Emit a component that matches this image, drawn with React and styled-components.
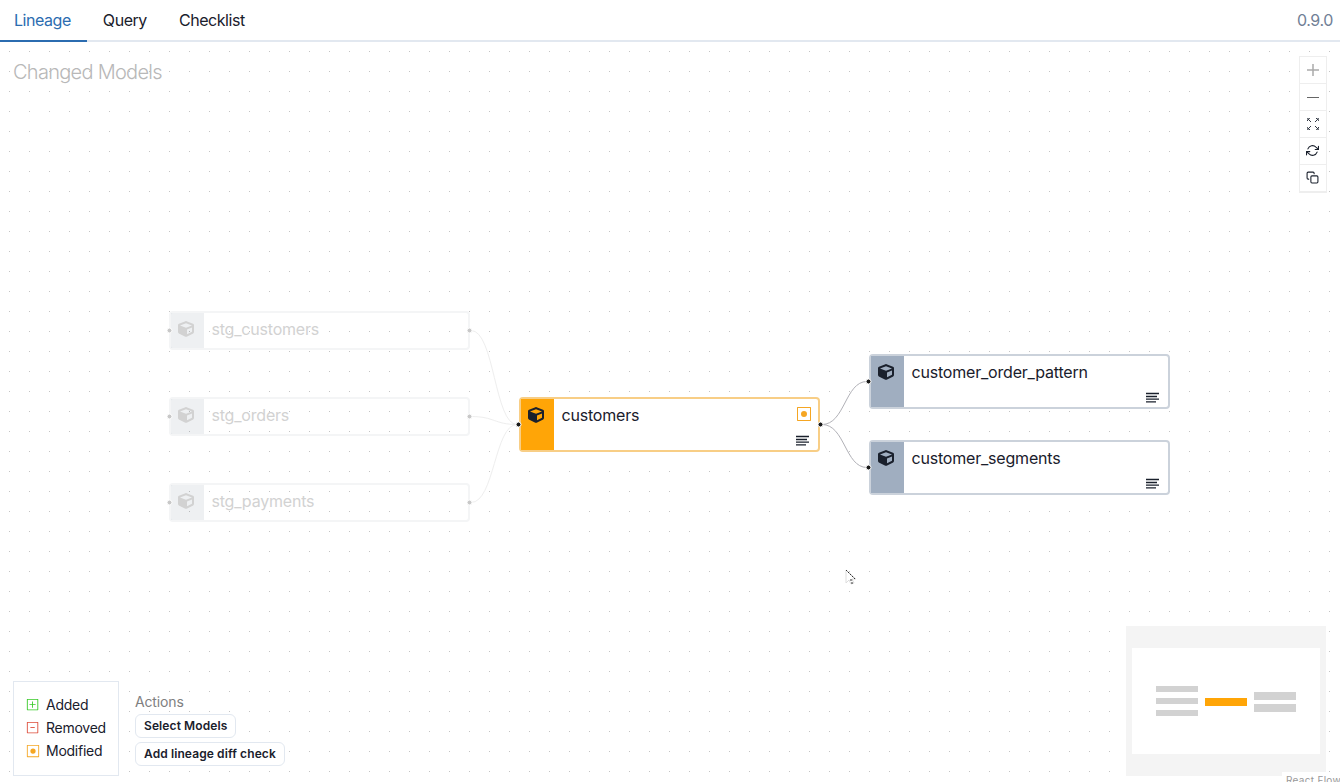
import React from "react";
import styled, { createGlobalStyle } from "styled-components";
import { FaCube } from "react-icons/fa";
import { VscDiffAdded, VscDiffRemoved, VscDiffModified } from "react-icons/vsc";
import { FiRefreshCw, FiCopy } from "react-icons/fi";

const Global = createGlobalStyle`
  * { box-sizing: border-box; }
  body { margin: 0; background: #fff; color: #1a202c; font-family: Inter, "Liberation Sans", sans-serif; font-size: 16px; line-height: 24px; overflow: hidden; }
`;
const Page = styled.div`display: flex; flex-direction: column; width: 1340px; height: 782px; overflow: hidden;`;
const TabBar = styled.nav`display: flex; height: 42px; border-bottom: 2px solid #e2e8f0;`;
const Tab = styled.div`
  height: 42px; padding: 8px 16px; letter-spacing: -0.45px;
  color: ${(p) => (p.$active ? "#2b6cb0" : "#1a202c")};
  border-bottom: 2px solid ${(p) => (p.$active ? "#2b6cb0" : "transparent")};
  &:first-child { padding-left: 14px; }
`;
const Version = styled.div`margin-left: auto; padding: 8px 7px 0 0; color: #718096; letter-spacing: -0.4px;`;
const Canvas = styled.main`
  position: relative; flex: 1; display: flex; flex-direction: column; justify-content: space-between; overflow: hidden;
  background: conic-gradient(from 0deg at 1px 1px, transparent 0 75%, #c4c4c4 75%) 9px 9px / 20px 20px;
`;
const Row = styled.div`display: flex; justify-content: space-between; align-items: ${(p) => p.$align};`;
const Title = styled.div`padding: 15px 0 0 13px; font-size: 20px; line-height: 30px; color: #b8b8b8; font-weight: 300; letter-spacing: -0.72px;`;
const Controls = styled.div`
  display: flex; flex-direction: column; margin: 14px 13px 0 0; border: 1px solid #eee; background: #fff; width: 28px;
`;
const Control = styled.div`
  display: flex; align-items: center; justify-content: center; height: 27px; border-bottom: 1px solid #eee; color: ${(p) => (p.$dim ? "#aaa" : "#1a202c")};
  padding: ${(p) => (p.$size ? "0 1px 1px 0" : "0")};
  svg { width: ${(p) => p.$size || 12}px; height: ${(p) => p.$size || 12}px; }
`;
const Edges = styled.svg`position: absolute; left: 0; top: -42px; width: 1340px; height: 782px;`;
const Node = styled.div`
  position: absolute; left: ${(p) => p.$x}px; top: ${(p) => p.$y - 42}px; width: 301px; height: ${(p) => p.$h}px;
  display: flex; border: 2px solid ${(p) => p.$border}; border-radius: 4px;
  background: ${(p) => (p.$faded ? "transparent" : "#fff")};
`;
const NodeIcon = styled.div`
  display: flex; justify-content: center; width: 33px; padding: 7.5px 3px 0 0; background: ${(p) => p.$bg}; color: ${(p) => p.$fg};
  svg { width: 16px; height: 16px; }
`;
const NodeBody = styled.div`
  flex: 1; display: flex; flex-direction: column; justify-content: space-between; padding: 4px 8px 4px 7.5px; color: ${(p) => p.$fg};
  letter-spacing: -0.2px;
`;
const NodeHead = styled.div`
  display: flex; justify-content: space-between; align-items: center; height: 24px;
  svg { color: #f5a623; margin: -2px -2px 0 0; }
`;
const Lines = styled.svg`align-self: flex-end;`;
const Bottom = styled.div`display: flex; align-items: flex-end; padding-left: 13px;`;
const Legend = styled.div`
  width: 106px; height: 95px; border: 1px solid #e2e8f0; background: #fff; padding: 12px; margin-bottom: 6px; font-size: 14px; line-height: 21px;
  display: flex; flex-direction: column; gap: 2px; letter-spacing: -0.25px;
`;
const LegendRow = styled.div`
  display: flex; align-items: center; gap: 6px;
  svg { flex: none; width: 14px; height: 14px; color: ${(p) => p.$c}; }
`;
const Actions = styled.div`
  display: flex; flex-direction: column; align-items: flex-start; gap: 4px; margin: 0 0 16px 16px; font-size: 14px;
`;
const ActionsLabel = styled.div`color: #808080; line-height: 20px; margin-bottom: -2px; letter-spacing: -0.15px;`;
const Button = styled.button`
  height: 24px; padding: 0 8px 2px; border: 1px solid #e2e8f0; border-radius: 6px; background: #fff; color: #1a202c;
  font: 600 12px Inter, sans-serif; letter-spacing: 0.1px;
`;
const MapColumn = styled.div`position: relative; width: 200px; height: 156px; margin-right: 14px;`;
const MiniMap = styled.svg`display: block;`;
const Attribution = styled.div`
  position: absolute; left: 156px; top: 146px; width: 60px; height: 12px; padding: 2px 4px; background: #fff; color: #999; font-size: 10px; line-height: 13px; white-space: nowrap; letter-spacing: 0.3px;
`;
const Cursor = styled.svg`position: absolute; left: 844px; top: 527px;`;

const tones = {
  faded: { border: "#f4f5f6", bg: "rgba(90, 104, 124, 0.1)", fg: "#d2d2d2" },
  modified: { border: "#f8ce86", bg: "#ffa507", fg: "#1a202c" },
  plain: { border: "#cbd2db", bg: "#a0aec0", fg: "#1a202c" },
};
const nodes = [
  { name: "stg_customers", x: 169, y: 311, h: 39, tone: "faded" },
  { name: "stg_orders", x: 169, y: 397, h: 39, tone: "faded" },
  { name: "stg_payments", x: 169, y: 483, h: 39, tone: "faded" },
  { name: "customers", x: 519, y: 397, h: 55, tone: "modified" },
  { name: "customer_order_pattern", x: 869, y: 354, h: 55, tone: "plain" },
  { name: "customer_segments", x: 869, y: 440, h: 55, tone: "plain" },
];
const edges = [
  ["M471 330.5C494.5 330.5 494.5 424.5 517 424.5", "#eee"],
  ["M471 416.5C494.5 416.5 494.5 424.5 517 424.5", "#eee"],
  ["M471 502.5C494.5 502.5 494.5 424.5 517 424.5", "#eee"],
  ["M822 424.5C845 424.5 845 381.5 867 381.5", "#b1b1b7"],
  ["M822 424.5C845 424.5 845 467.5 867 467.5", "#b1b1b7"],
];
const handles = [
  [169.5, 330.5, 1], [469.5, 330.5, 1], [169.5, 416.5, 1], [469.5, 416.5, 1], [169.5, 502.5, 1], [469.5, 502.5, 1],
  [518.5, 424.5], [820.5, 424.5], [868.5, 381.5], [868.5, 467.5],
];

function ModelNode({ name, x, y, h, tone }) {
  const t = tones[tone];
  return (
    <Node $x={x} $y={y} $h={h} $border={t.border} $faded={tone === "faded"}>
      <NodeIcon $bg={t.bg} $fg={t.fg}><FaCube /></NodeIcon>
      <NodeBody $fg={t.fg}>
        <NodeHead>{name}{tone === "modified" && <VscDiffModified />}</NodeHead>
        {tone !== "faded" && (
          <Lines width="14" height="11" stroke="currentColor" strokeWidth="1.3"><path d="M0 1.5h13M0 4.5h11M0 7.2h13M0 9.8h10" /></Lines>
        )}
      </NodeBody>
    </Node>
  );
}

function FitIcon() {
  return (
    <svg viewBox="0 0 12 12" fill="none" stroke="currentColor" strokeWidth="0.9">
      <path d="M.5 3V.5H3M9 .5h2.500V3M11.500 9v2.500H9M3 11.500H.5V9" strokeDasharray="1.500 .6" />
      <path d="M1 1l3 3M11 1L8 4M11 11L8 8M1 11l3-3" />
    </svg>
  );
}

export default function App() {
  return (
    <Page>
      <Global />
      <TabBar>
        <Tab $active>Lineage</Tab><Tab>Query</Tab><Tab>Checklist</Tab>
        <Version>0.9.0</Version>
      </TabBar>
      <Canvas>
        <Edges fill="none">{edges.map(([d, c]) => <path key={d} d={d} stroke={c} />)}</Edges>
        {nodes.map((n) => <ModelNode key={n.name} {...n} />)}
        <Edges>
          {handles.map(([x, y, f]) => <circle key={`${x}-${y}`} cx={x} cy={y} r="2.5" fill={f ? "#c8c8c8" : "#1a1a1a"} stroke="#fff" />)}
        </Edges>
        <Row $align="flex-start">
          <Title>Changed Models</Title>
          <Controls>
            <Control $dim><svg viewBox="0 0 12 12" stroke="currentColor" strokeWidth="1.5"><path d="M0 6h12M6 0v12" /></svg></Control>
            <Control><svg viewBox="0 0 12 12" stroke="#666"><path d="M0 6.5h12" /></svg></Control>
            <Control><FitIcon /></Control>
            <Control $size={13}><FiRefreshCw /></Control>
            <Control $size={13}><FiCopy /></Control>
          </Controls>
        </Row>
        <Row $align="flex-end">
          <Bottom>
            <Legend>
              <LegendRow $c="#36c926"><VscDiffAdded />Added</LegendRow>
              <LegendRow $c="#dd4b39"><VscDiffRemoved />Removed</LegendRow>
              <LegendRow $c="#f5a623"><VscDiffModified />Modified</LegendRow>
            </Legend>
            <Actions>
              <ActionsLabel>Actions</ActionsLabel>
              <Button>Select Models</Button>
              <Button>Add lineage diff check</Button>
            </Actions>
          </Bottom>
          <MapColumn>
            <MiniMap width="200" height="150">
              <path fill="#f4f4f4" d="M0 0h200v150H0z" /><path fill="#fff" d="M6 22h188v106H6z" />
              <path fill="#d2d2d2" d="M30 60h42v6H30zM30 72h42v6H30zM30 84h42v6H30zM128 66h42v8h-42zM128 78h42v8h-42z" />
              <path fill="#ffa507" d="M79 72h42v8H79z" />
            </MiniMap>
            <Attribution>React Flow</Attribution>
          </MapColumn>
        </Row>
        <Cursor width="14" height="20">
          <path d="M2 1v13l3-3 2 4 3-1-2-4h4z" fill="#fff" stroke="#ddd" />
          <path d="M2 1l9 9M6 11h3M7 14h2" stroke="#333" strokeDasharray="2 .8" />
        </Cursor>
      </Canvas>
    </Page>
  );
}
